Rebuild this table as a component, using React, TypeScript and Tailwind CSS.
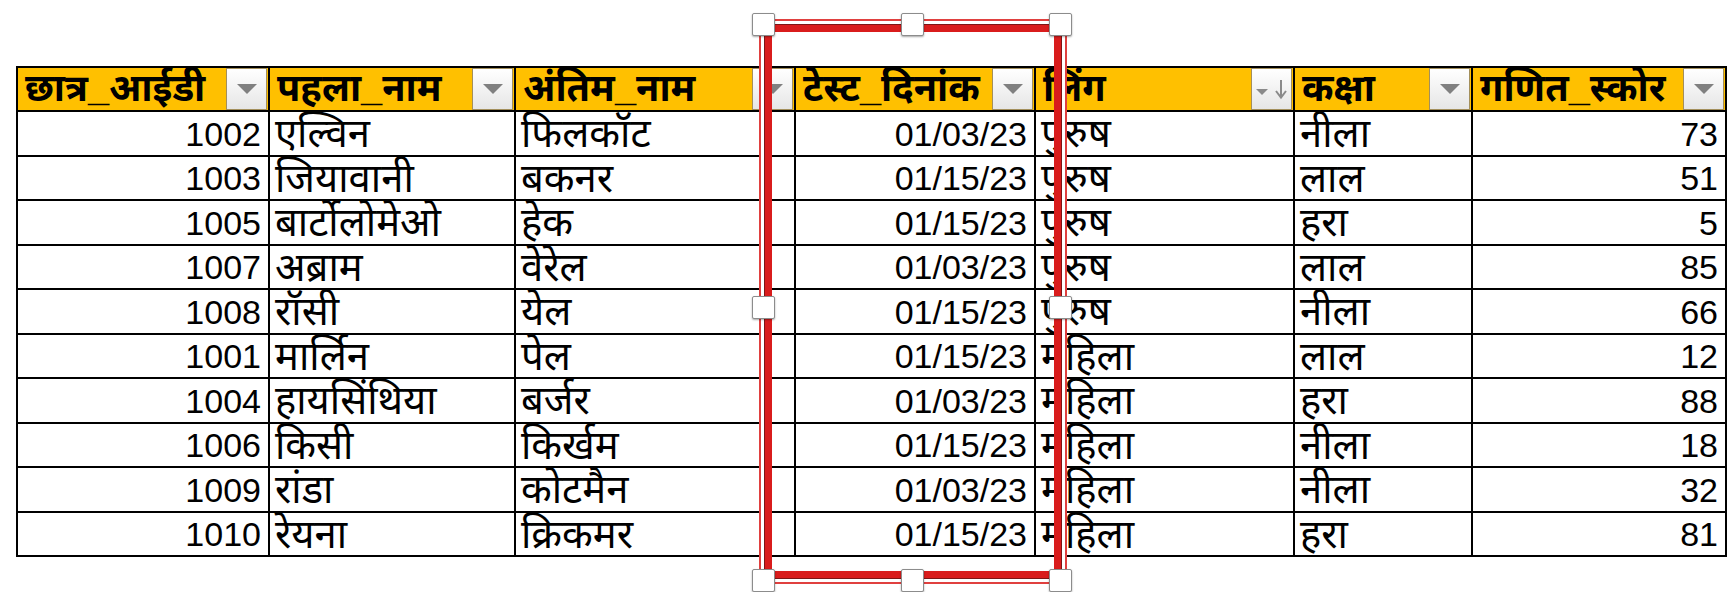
import React from "react";

type Row = [number, string, string, string, string, string, number];

const HEADERS = ["छात्र_आईडी", "पहला_नाम", "अंतिम_नाम", "टेस्ट_दिनांक", "लिंग", "कक्षा", "गणित_स्कोर"];

const ROWS: Row[] = [
  [1002, "एल्विन", "फिलकॉट", "01/03/23", "पुरुष", "नीला", 73],
  [1003, "जियावानी", "बकनर", "01/15/23", "पुरुष", "लाल", 51],
  [1005, "बार्टोलोमेओ", "हेक", "01/15/23", "पुरुष", "हरा", 5],
  [1007, "अब्राम", "वेरेल", "01/03/23", "पुरुष", "लाल", 85],
  [1008, "रॉसी", "येल", "01/15/23", "पुरुष", "नीला", 66],
  [1001, "मार्लिन", "पेल", "01/15/23", "महिला", "लाल", 12],
  [1004, "हायसिंथिया", "बर्जर", "01/03/23", "महिला", "हरा", 88],
  [1006, "किसी", "किर्खम", "01/15/23", "महिला", "नीला", 18],
  [1009, "रांडा", "कोटमैन", "01/03/23", "महिला", "नीला", 32],
  [1010, "रेयना", "क्रिकमर", "01/15/23", "महिला", "हरा", 81],
];

// numbers and dates sit right, names left
const RIGHT = [true, false, false, true, false, false, true];

function FilterButton({ sorted }: { sorted?: boolean }) {
  return (
    <div className="w-[41px] h-[42px] shrink-0 border border-[#a38f5c] bg-linear-to-b from-white to-[#e6e6e6] flex items-center justify-center">
      {sorted ? (
        <svg width="34" height="22" viewBox="0 0 34 22">
          <polygon points="1,11 13,11 7,17" fill="#8a8a8a" />
          <line x1="26" y1="2" x2="26" y2="19" stroke="#8a8a8a" strokeWidth="2" />
          <polyline points="21,13 26,19.5 31,13" fill="none" stroke="#8a8a8a" strokeWidth="2" />
        </svg>
      ) : (
        <svg width="20" height="10" viewBox="0 0 20 10">
          <polygon points="0,0 20,0 10,10" fill="#808080" />
        </svg>
      )}
    </div>
  );
}

function Handle() {
  return <div className="w-[23px] h-[23px] bg-white border border-[#8c8c8c] rounded-[2px] shadow-[0_1px_2px_rgba(0,0,0,0.35)]" />;
}

export default function App() {
  const CELL = "border-r-2 border-b-2 border-black overflow-hidden flex items-center whitespace-nowrap";
  return (
    <div className="relative w-[1736px] h-[592px] bg-white font-['Liberation_Sans','Noto_Sans',sans-serif] text-black">
      <div className="pl-[16px] pt-[66px]">
        <div className="grid grid-cols-[252px_246px_280px_240px_259px_178px_254px] border-l-2 border-t-2 border-black w-fit">
          {HEADERS.map((h, i) => (
            <div key={h} className={`${CELL} h-[44px] bg-[#ffc000] justify-between pl-[7px] pr-[1px] text-[38px] font-bold leading-none`}>
              <span className="pb-[2px]">{h}</span>
              <FilterButton sorted={i === 4} />
            </div>
          ))}
          {ROWS.map((r) =>
            r.map((v, i) => (
              <div
                key={`${r[0]}-${i}`}
                className={`${CELL} h-[44.5px] px-[7px] leading-none ${
                  typeof v === "string" && !RIGHT[i] ? "text-[40px] pl-[5px]" : "text-[34px] pt-[1px]"
                } ${RIGHT[i] ? "justify-end" : "justify-start"}`}
              >
                {v}
              </div>
            ))
          )}
        </div>
      </div>

      {/* selected shape: thin outer red, white gap, thick inner red, with 8 handles */}
      <div className="absolute left-[752px] top-[13px] w-[320px] h-[579px]">
        <div className="absolute left-[7px] top-[6px] right-[5px] bottom-[8px] border-2 border-[#e0403f]">
          <div className="absolute inset-0 border-[3px] border-white">
            <div className="absolute inset-0 border border-[#7d1515]">
              <div className="absolute inset-0 border-[7px] border-[#d91c1c]" />
            </div>
          </div>
        </div>
        <div className="relative h-full flex flex-col justify-between">
          <div className="flex justify-between">
            <Handle />
            <Handle />
            <Handle />
          </div>
          <div className="flex justify-between translate-y-[5px]">
            <Handle />
            <Handle />
          </div>
          <div className="flex justify-between">
            <Handle />
            <Handle />
            <Handle />
          </div>
        </div>
      </div>
    </div>
  );
}
